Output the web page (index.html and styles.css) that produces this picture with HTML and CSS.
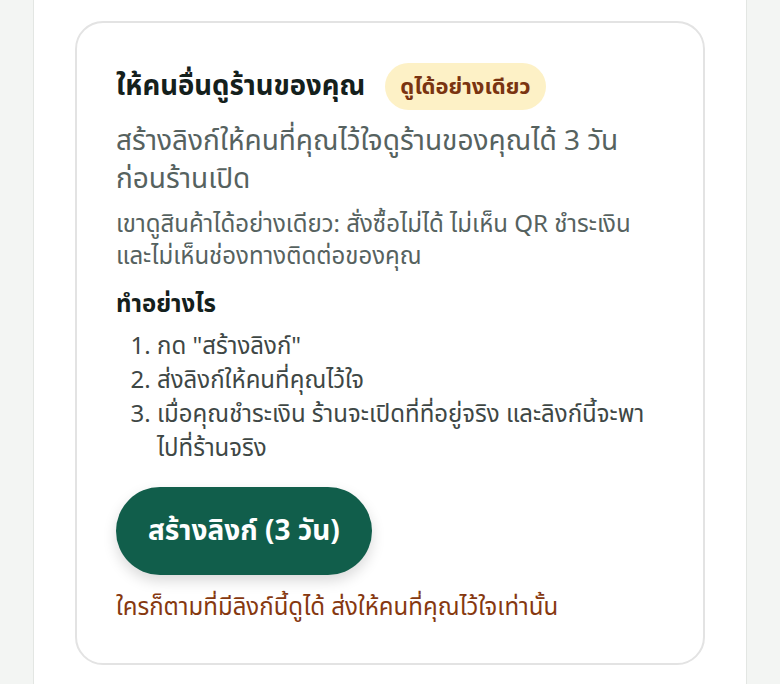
FILE: index.html
```html
<!DOCTYPE html>
<html lang="th">
<head>
    <meta charset="UTF-8">
    <meta name="viewport" content="width=device-width, initial-scale=1.0">
    <title>ให้คนอื่นดูร้านของคุณ</title>
    <link rel="stylesheet" href="styles.css">
</head>
<body>
    <div class="page">
        <div class="card">
            <div class="card-head">
                <h2>ให้คนอื่นดูร้านของคุณ</h2>
                <span class="badge">ดูได้อย่างเดียว</span>
            </div>
            <p class="lead">สร้างลิงก์ให้คนที่คุณไว้ใจดูร้านของคุณได้ 3 วัน ก่อนร้านเปิด</p>
            <p class="note">เขาดูสินค้าได้อย่างเดียว: สั่งซื้อไม่ได้ ไม่เห็น QR ชำระเงิน <span class="keep">และไม่เห็นช่องทางติดต่อของคุณ</span></p>

            <h3>ทำอย่างไร</h3>
            <ol class="steps">
                <li>กด "สร้างลิงก์"</li>
                <li>ส่งลิงก์ให้คนที่คุณไว้ใจ</li>
                <li>เมื่อคุณชำระเงิน ร้านจะเปิดที่ที่อยู่จริง และลิงก์นี้จะพา<span class="keep">ไปที่ร้านจริง</span></li>
            </ol>

            <button class="button">สร้างลิงก์ (3 วัน)</button>
            <p class="warn">ใครก็ตามที่มีลิงก์นี้ดูได้ ส่งให้คนที่คุณไว้ใจเท่านั้น</p>
        </div>
    </div>
</body>
</html>
```
FILE: styles.css
```css
body {
    font-family: "Noto Sans", "Noto Sans Thai", sans-serif;
    background-color: #f3f5f3;
    margin: 0;
    color: #1b1f1e;
}

.page {
    width: 714px;
    margin: 0 auto;
    min-height: 100vh;
    background: #fff;
    border-left: 1px solid #e3e6e3;
    border-right: 1px solid #e3e6e3;
    padding: 21px 41px 40px;
    box-sizing: border-box;
}

.card {
    border: 2px solid #e3e3e3;
    border-radius: 28px;
    padding: 40px 52px 41px 39px;
}

.card-head {
    display: flex;
    align-items: center;
    gap: 20px;
}
.card-head h2 {
    margin: 0;
    font-size: 27.5px;
    font-weight: 700;
    color: #14201c;
    white-space: nowrap;
}

.badge {
    background: #fdf1c6;
    color: #7a3410;
    font-size: 22px;
    font-weight: 700;
    padding: 0 15px;
    height: 47px;
    display: flex;
    align-items: center;
    border-radius: 24px;
    white-space: nowrap;
}

.lead {
    margin: 10px 0 0;
    font-size: 28px;
    line-height: 38px;
    color: #56625f;
}

.note {
    margin: 11px 0 0;
    font-size: 24px;
    line-height: 32px;
    color: #56625f;
}
.keep {
    white-space: nowrap;
}

h3 {
    margin: 17px 0 0;
    font-size: 24px;
    line-height: 30px;
    font-weight: 700;
    color: #14201c;
}

.steps {
    margin: 10px 0 0;
    padding-left: 41px;
    font-size: 24px;
    line-height: 34px;
    color: #3e4745;
}

.button {
    margin-top: 23px;
    background-color: #115e4b;
    color: #fff;
    border: none;
    border-radius: 44px;
    height: 88px;
    padding: 0 32px;
    font-family: inherit;
    font-size: 28px;
    font-weight: 700;
    box-shadow: 0 6px 14px rgba(0, 0, 0, 0.15);
    cursor: pointer;
}

.warn {
    margin: 15px 0 0;
    font-size: 24px;
    line-height: 32px;
    color: #86380f;
}
```
